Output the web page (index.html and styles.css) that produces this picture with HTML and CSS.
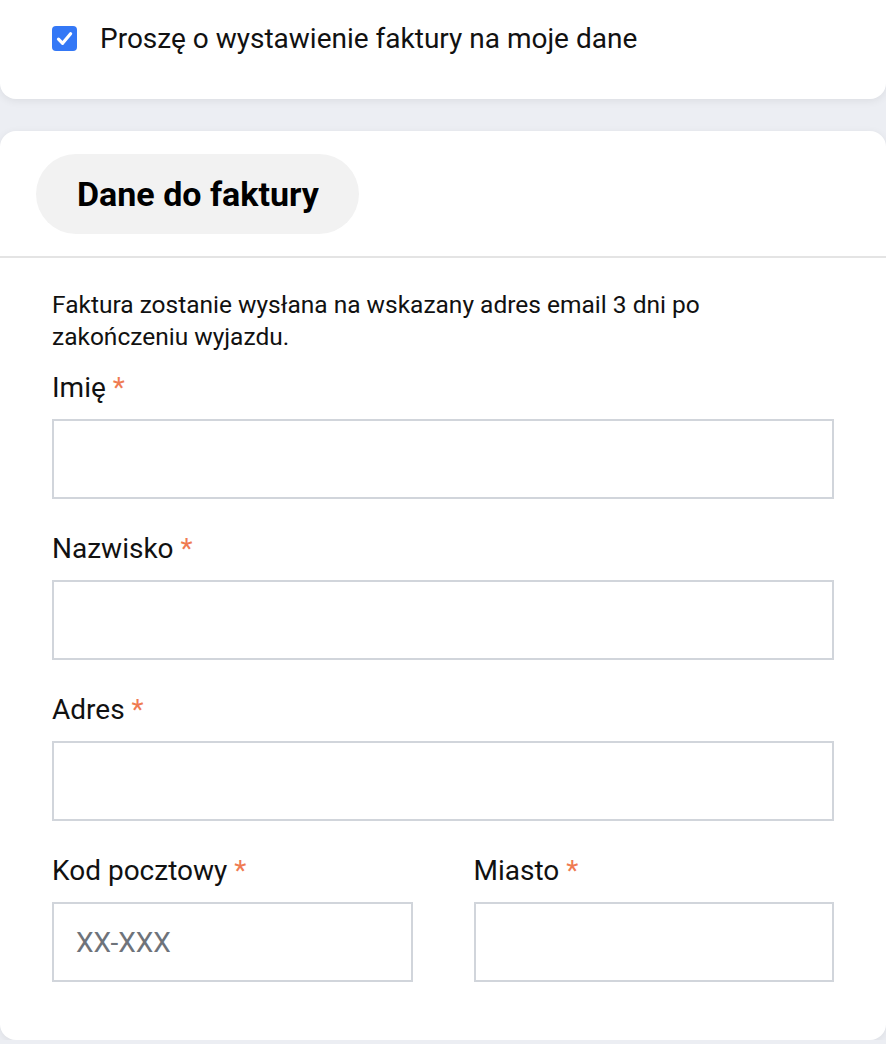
FILE: index.html
```html
<!DOCTYPE html>
<html lang="pl">
<head>
    <meta charset="utf-8">
    <link rel="stylesheet" href="styles.css">
</head>
<body>
    <div class="page">
        <div class="card">
            <label class="check-row">
                <span class="box">
                    <svg width="25" height="25" viewBox="0 0 25 25">
                        <path d="M6.5 13.2 L10.6 17.3 L18.6 7.8" fill="none" stroke="#fff" stroke-width="3.2" stroke-linecap="round" stroke-linejoin="round"/>
                    </svg>
                </span>
                <span>Proszę o wystawienie faktury na moje dane</span>
            </label>
        </div>

        <div class="card invoice">
            <div class="invoice-head">
                <h2 class="pill">Dane do faktury</h2>
            </div>
            <div class="invoice-body">
                <p class="note">Faktura zostanie wysłana na wskazany adres email 3 dni po zakończeniu wyjazdu.</p>

                <div class="field">
                    <label>Imię <span class="req">*</span></label>
                    <input type="text">
                </div>
                <div class="field">
                    <label>Nazwisko <span class="req">*</span></label>
                    <input type="text">
                </div>
                <div class="field">
                    <label>Adres <span class="req">*</span></label>
                    <input type="text">
                </div>
                <div class="row">
                    <div class="field">
                        <label>Kod pocztowy <span class="req">*</span></label>
                        <input type="text" placeholder="XX-XXX">
                    </div>
                    <div class="field">
                        <label>Miasto <span class="req">*</span></label>
                        <input type="text">
                    </div>
                </div>
            </div>
        </div>
    </div>
</body>
</html>
```

FILE: styles.css
```css
body {
    margin: 0;
    background: #eceef3;
    font-family: Roboto, "Liberation Sans", Arial, sans-serif;
    color: #111;
}

.page {
    margin-top: -24px;
    display: flex;
    flex-direction: column;
    gap: 32px;
}

.card {
    background: white;
    border-radius: 16px;
    box-shadow: rgba(0, 0, 0, 0.07) 0px 2px 8px;
}

.card:first-child {
    padding: 46px 52px 45px;
}

.check-row {
    display: flex;
    align-items: center;
    gap: 23px;
    height: 32px;
    font-size: 28px;
}

.box {
    width: 25px;
    height: 25px;
    border-radius: 4px;
    background: #3478f6;
    display: flex;
}

.invoice-head {
    padding: 23px 36px 22px;
    border-bottom: 2px solid #e4e4e4;
}

.pill {
    display: inline-block;
    margin: 0;
    height: 80px;
    line-height: 80px;
    padding: 0 40px 0 41px;
    border-radius: 40px;
    background: #f2f2f2;
    font-size: 34px;
    font-weight: 700;
    color: #000;
}

.invoice-body {
    padding: 31px 52px 58px;
}

.note {
    margin: 0 0 17px;
    max-width: 740px;
    font-size: 24.5px;
    line-height: 32px;
}

.field {
    display: flex;
    flex-direction: column;
    gap: 13px;
    margin-bottom: 32px;
}

.field label {
    font-size: 28px;
    line-height: 36px;
}

.req {
    color: #ef7b52;
}

.field input {
    box-sizing: border-box;
    height: 80px;
    width: 100%;
    border: 2px solid #d1d5db;
    padding: 0 22px;
    font-family: inherit;
    font-size: 28px;
    background: white;
    outline: none;
}

.field input::placeholder {
    color: #6e737a;
}

.row {
    display: grid;
    grid-template-columns: 1fr 1fr;
    column-gap: 61px;
}

.row .field {
    margin-bottom: 0;
}
```
